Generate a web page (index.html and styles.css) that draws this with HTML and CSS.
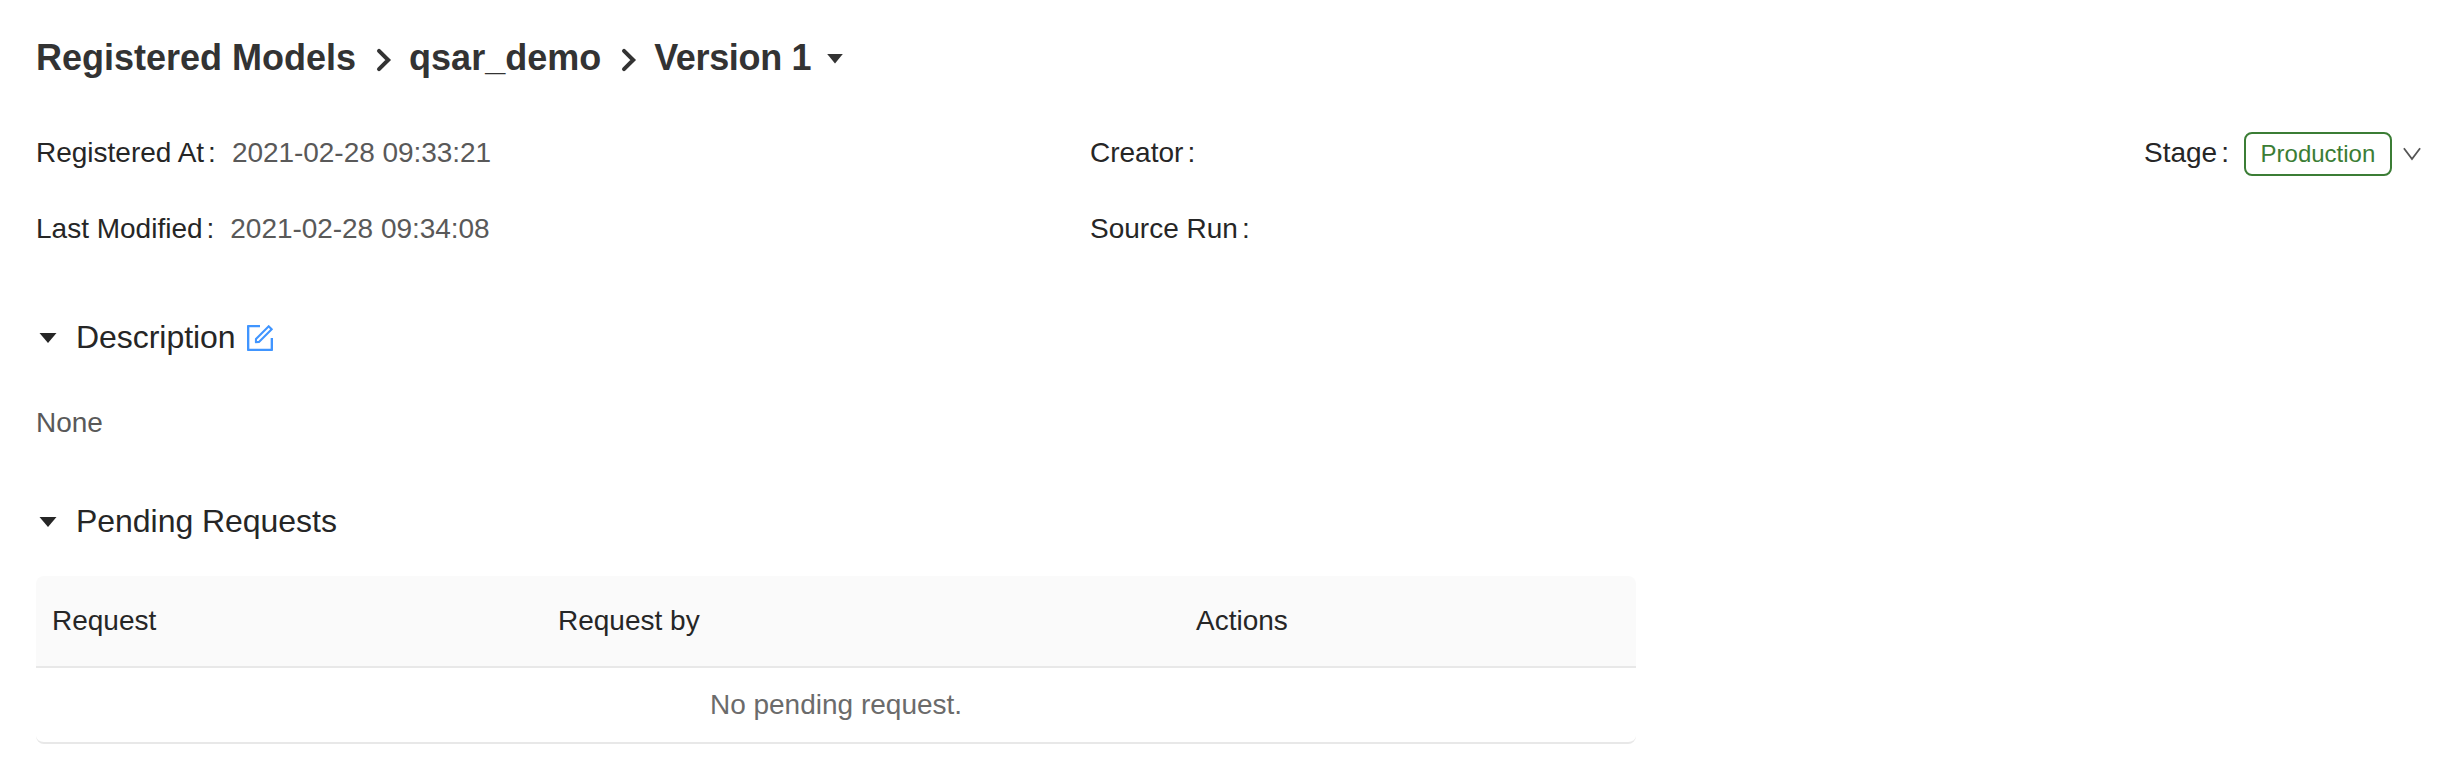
FILE: index.html
```html
<!DOCTYPE html>
<html lang="en">
<head>
<meta charset="utf-8">
<title>Registered Models</title>
<link rel="stylesheet" href="styles.css">
</head>
<body>
<main class="page">
  <h1 class="breadcrumb">
    <span>Registered Models</span>
    <svg class="sep" viewBox="0 0 16 26"><path d="M3 3.8 12.2 13 3 22.2"/></svg>
    <span>qsar_demo</span>
    <svg class="sep sep-second" viewBox="0 0 16 26"><path d="M3 3.8 12.2 13 3 22.2"/></svg>
    <span class="version">Version 1</span>
    <svg class="caret caret-title" viewBox="0 0 18 12"><path d="M1.2 1h15.6L9 10.5z"/></svg>
  </h1>

  <div class="meta">
    <div class="item"><span class="label">Registered At</span><span class="value">2021-02-28 09:33:21</span></div>
    <div class="item"><span class="label">Creator</span></div>
    <div class="item"><span class="label">Stage</span><span class="tag">Production</span><svg class="down" viewBox="0 0 20 14"><path d="M1.9 1.2 10 12 18.1 1.2"/></svg></div>
    <div class="item"><span class="label">Last Modified</span><span class="value">2021-02-28 09:34:08</span></div>
    <div class="item"><span class="label">Source Run</span></div>
  </div>

  <section class="section">
    <h2 class="heading">
      <svg class="caret" viewBox="0 0 18 12"><path d="M.5 1h17L9 11z"/></svg>
      <span>Description</span>
      <svg class="edit" viewBox="112 112 800 800"><path d="M904 512h-56c-4.4 0-8 3.6-8 8v320H184V184h320c4.4 0 8-3.6 8-8v-56c0-4.4-3.6-8-8-8H144c-17.7 0-32 14.3-32 32v736c0 17.7 14.3 32 32 32h736c17.7 0 32-14.3 32-32V520c0-4.4-3.6-8-8-8z"/><path d="M355.9 534.9L354 653.8c-.1 8.9 7.1 16.2 16 16.2h.4l118-2.9c2-.1 4-.9 5.4-2.3l415.9-415c3.1-3.1 3.1-8.2 0-11.3L785.4 114.3c-1.6-1.6-3.6-2.3-5.7-2.3s-4.1.8-5.7 2.3l-415.8 415a8.3 8.3 0 0 0-2.3 5.6zm63.5 23.6L779.7 199l45.2 45.1-360.5 359.7-45.7 1.1.7-46.4z"/></svg>
    </h2>
    <p class="note">None</p>
  </section>

  <section class="section">
    <h2 class="heading">
      <svg class="caret" viewBox="0 0 18 12"><path d="M.5 1h17L9 11z"/></svg>
      <span>Pending Requests</span>
    </h2>
    <div class="table">
      <div class="thead"><span>Request</span><span>Request by</span><span>Actions</span></div>
      <div class="empty">No pending request.</div>
    </div>
  </section>
</main>
</body>
</html>
```

FILE: styles.css
```css
* { box-sizing: border-box; }

body {
  margin: 0;
  background: #fff;
  color: #262626;
  font: 28px/44px "Liberation Sans", Helvetica, Arial, sans-serif;
}

.page { padding: 32px 0 0 36px; }

.breadcrumb {
  display: flex;
  align-items: center;
  height: 52px;
  margin: 0 0 47px;
  color: #333;
  font-size: 36px;
  line-height: 52px;
  white-space: nowrap;
}

.sep {
  width: 16px;
  height: 26px;
  margin: 4px 17px 0 20px;
  fill: none;
  stroke: #333;
  stroke-width: 4;
  stroke-linecap: round;
}

.version { letter-spacing: -0.35px; }

.caret { width: 18px; height: 12px; fill: #262626; }
.caret-title { margin: 2px 0 0 15px; fill: #333; }

.meta {
  display: grid;
  grid-template-columns: 1054px 1054px auto;
  row-gap: 32px;
}

.item { display: flex; height: 44px; }
.label::after { content: ":"; margin: 0 16px 0 4px; }
.value { color: #595959; letter-spacing: -0.04px; }

.tag {
  width: 148px;
  height: 44px;
  margin: 1px 0 0 -1px;
  border: 2px solid #3b7d35;
  border-radius: 8px;
  color: #3b7d35;
  font-size: 24px;
  line-height: 40px;
  text-align: center;
}

.down {
  width: 20px;
  height: 14px;
  margin: 16px 0 0 10px;
  fill: none;
  stroke: #555;
  stroke-width: 1.8;
}

.heading {
  display: flex;
  align-items: center;
  height: 48px;
  margin: 0;
  font-size: 32px;
  font-weight: 400;
  line-height: 48px;
  letter-spacing: -0.04px;
}

.heading .caret { margin: 2px 19px 0 3px; }
.edit { width: 26px; height: 26px; margin: 2px 0 0 11px; fill: #4095ff; }

.section { margin-top: 62px; }
.note { margin: 40px 0 0; color: #595959; }
.section + .section { margin-top: 52px; }

.table {
  width: 1600px;
  margin-top: 31px;
  border-bottom: 2px solid #e8e8e8;
  border-radius: 8px;
  overflow: hidden;
}

.thead {
  display: grid;
  grid-template-columns: 506px 638px 456px;
  height: 92px;
  border-bottom: 2px solid #e8e8e8;
  background: #fafafa;
  line-height: 90px;
}

.thead span { padding-left: 16px; }

.empty {
  height: 74px;
  color: #6b6b6b;
  line-height: 74px;
  text-align: center;
}
```
